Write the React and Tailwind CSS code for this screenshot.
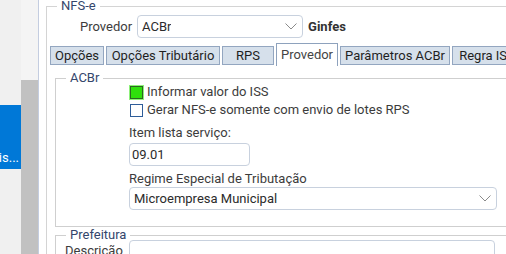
function Combo({ value, className }) {
  return (
    <div className={`flex items-center justify-between rounded-[4px] border border-[#c8d1de] bg-white pl-[4px] pr-[5px] ${className}`}>
      <span className="truncate text-[#2b2b2b]">{value}</span>
      <svg width="12" height="7" viewBox="0 0 12 7" className="shrink-0">
        <path d="M0.5 0.5 L6 6 L11.5 0.5" fill="none" stroke="#8a8a8a" strokeWidth="1" />
      </svg>
    </div>
  );
}

function Tab({ label, width, active }) {
  if (active) {
    return (
      <div className={`flex h-[23px] shrink-0 items-center justify-center border border-b-0 border-[#8ea2bd] bg-white ${width} text-[#444]`}>
        {label}
      </div>
    );
  }
  return (
    <div className={`mt-[3px] flex h-[19px] shrink-0 items-center justify-center border border-[#93a6c0] bg-[#d6e0eb] ${width} text-[#1f1f1f]`}>
      {label}
    </div>
  );
}

export default function App() {
  const tabs = [
    { label: 'Opções', width: 'w-[54px]' },
    { label: 'Opções Tributário', width: 'w-[114px]' },
    { label: 'RPS', width: 'w-[52px]' },
    { label: 'Provedor', width: 'w-[62px]', active: true },
    { label: 'Parâmetros ACBr', width: 'w-[110px]' },
    { label: 'Regra ISS', width: 'w-[70px]' },
  ];

  return (
    <div className="flex h-[254px] w-[506px] overflow-hidden bg-white font-['Roboto',sans-serif] text-[13px] leading-[16px] text-[#3c3c3c]">
      {/* lista lateral */}
      <div className="flex w-[21px] shrink-0 flex-col bg-[#f0f0f0]">
        <div className="h-[105px]" />
        <div className="flex h-[64px] items-end justify-end overflow-hidden whitespace-nowrap bg-[#0078d7] pb-[3px] pr-[2px] text-white">
          Fiscais...
        </div>
      </div>
      <div className="flex w-[17px] shrink-0 flex-col bg-[#f4f4f4]">
        <div className="h-[80px]" />
        <div className="flex-1 bg-[#c1c1c1]" />
      </div>
      <div className="w-px shrink-0 bg-[#c4cde0]" />

      {/* conteúdo */}
      <div className="w-[600px] shrink-0 pl-[7px]">
        <fieldset className="w-[590px] border border-[#d4d4d4] pb-[10px]">
          <legend className="ml-[10px] px-[4px] leading-[12px] text-[#34466c]">NFS-e</legend>

          <div className="mt-[3px] flex items-center">
            <span className="ml-[33px]">Provedor</span>
            <Combo value="ACBr" className="ml-[5px] h-[23px] w-[166px]" />
            <span className="ml-[5px] font-bold text-[#333]">Ginfes</span>
          </div>

          <div className="ml-[3px] mt-[5px] flex items-start gap-[2px]">
            {tabs.map((t) => (
              <Tab key={t.label} {...t} />
            ))}
          </div>

          <fieldset className="ml-[8px] mt-[6px] w-[560px] border border-[#cfcfcf] pb-[16px]">
            <legend className="ml-[10px] px-[4px] leading-[12px] text-[#34466c]">ACBr</legend>
            <div className="-mt-px flex flex-col pl-[73px]">
              <div className="flex h-[18px] items-center">
                <span className="ml-px h-[13px] w-[13px] border border-[#2c6622] bg-[#2fe00c] ring-1 ring-[#8ef07a]" />
                <span className="ml-[4px]">Informar valor do ISS</span>
              </div>
              <div className="flex h-[18px] items-center">
                <span className="ml-px h-[13px] w-[13px] border border-[#2e5d99] bg-white" />
                <span className="ml-[4px]">Gerar NFS-e somente com envio de lotes RPS</span>
              </div>
              <div className="mt-[6px]">Item lista serviço:</div>
              <div className="mt-[2px] flex h-[23px] w-[121px] items-center rounded-[4px] border border-[#c8d1de] pl-[2px] text-[#2b2b2b]">
                09.01
              </div>
              <div className="mt-[5px]">Regime Especial de Tributação</div>
              <Combo value="Microempresa Municipal" className="h-[23px] w-[368px]" />
            </div>
          </fieldset>

          <fieldset className="ml-[8px] mt-[2px] w-[560px] border border-[#cfcfcf]">
            <legend className="ml-[10px] px-[4px] leading-[12px] text-[#34466c]">Prefeitura</legend>
            <div className="-mt-px flex items-start">
              <span className="ml-[9px] mt-[3px]">Descrição</span>
              <div className="ml-[6px] h-[23px] w-[366px] rounded-[4px] border border-[#c8d1de]" />
            </div>
          </fieldset>
        </fieldset>
      </div>
    </div>
  );
}
